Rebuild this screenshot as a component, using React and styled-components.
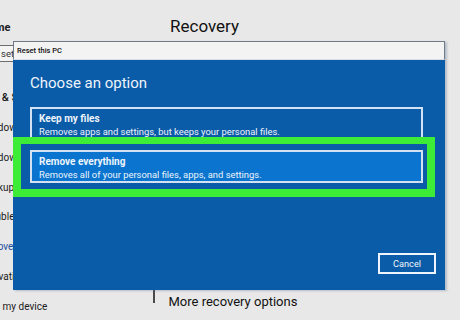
import React from "react";
import styled, { createGlobalStyle } from "styled-components";

const GlobalStyle = createGlobalStyle`
  html, body {
    margin: 0;
    padding: 0;
    background: #e8e8e8;
    font-family: Roboto, "Open Sans", sans-serif;
  }
`;

const navItems = [
  { label: "Windows Update" },
  { label: "Windows Security" },
  { label: "Backup" },
  { label: "Troubleshoot" },
  { label: "Recovery", active: true },
  { label: "Activation" },
  { label: "Find my device" },
];

const options = [
  {
    title: "Keep my files",
    text: "Removes apps and settings, but keeps your personal files.",
  },
  {
    title: "Remove everything",
    text: "Removes all of your personal files, apps, and settings.",
    selected: true,
  },
];

const Page = styled.div`
  position: relative;
  width: 460px;
  height: 320px;
  overflow: hidden;
  display: flex;
  background: #e8e8e8;
  color: #1b1b1b;
`;

const Nav = styled.nav`
  width: 169px;
  margin-left: -19px;
  padding-top: 20px;
  display: flex;
  flex-direction: column;
  flex-shrink: 0;
`;

const HomeLink = styled.div`
  height: 16px;
  line-height: 16px;
  font-size: 11px;
  font-weight: 700;
  white-space: nowrap;
`;

const SearchBox = styled.div`
  margin: 9px 0 0 -15px;
  height: 17px;
  box-sizing: border-box;
  border: 1px solid #6d6d6d;
  background: #f4f4f4;
  padding-left: 6px;
  font-size: 9.5px;
  line-height: 15px;
  color: #333;
  white-space: nowrap;
`;

const NavHeader = styled.div`
  margin: 28px 0 0 -17px;
  height: 16px;
  line-height: 16px;
  font-size: 11px;
  font-weight: 500;
  white-space: nowrap;
`;

const NavList = styled.div`
  margin-top: 7px;
  display: flex;
  flex-direction: column;
`;

const NavItem = styled.div`
  height: 29.8px;
  line-height: 29.8px;
  font-size: 10px;
  white-space: nowrap;
  color: ${(p) => (p.$active ? "#1f4f9c" : "#1b1b1b")};
`;

const Main = styled.main`
  flex: 1;
  display: flex;
  flex-direction: column;
  padding: 12px 0 8px;
`;

const Title = styled.h1`
  margin: 0 0 0 20px;
  font-size: 17px;
  font-weight: 400;
  line-height: 28px;
  color: #111;
`;

const FooterRow = styled.div`
  margin-top: auto;
  display: flex;
  align-items: flex-start;
  height: 20px;
`;

const Caret = styled.span`
  width: 1.5px;
  height: 13px;
  margin: -2px 14px 0 3px;
  background: #4a4a4a;
`;

const MoreLink = styled.span`
  font-size: 13px;
  line-height: 20px;
  color: #111;
`;

const Dialog = styled.section`
  position: absolute;
  left: 13px;
  top: 41px;
  width: 432px;
  height: 249px;
  display: flex;
  flex-direction: column;
  box-shadow: 2px 1px 2px rgba(90, 110, 140, 0.35);
`;

const TitleBar = styled.div`
  height: 19px;
  box-sizing: border-box;
  border: 1px solid #6f7b86;
  border-bottom: 1px solid #d6dde6;
  background: #f3f3f3;
  padding-left: 3px;
  font-size: 7.5px;
  font-weight: 500;
  line-height: 17px;
  color: #111;
`;

const Body = styled.div`
  flex: 1;
  display: flex;
  flex-direction: column;
  background: #0b5ca8;
  padding: 13px 9px 16px 17px;
  color: #eef4fb;
`;

const Heading = styled.h2`
  margin: 0;
  font-size: 15px;
  font-weight: 400;
  line-height: 20px;
`;

const OptionList = styled.div`
  margin: 14px 13px 0 0;
  display: flex;
  flex-direction: column;
  gap: 10px;
`;

const Option = styled.div`
  position: relative;
  height: 33px;
  box-sizing: border-box;
  border: 2px solid #d3e2f2;
  background: ${(p) => (p.$selected ? "#0b74cf" : "transparent")};
  padding: 4px 7px 0;
  display: flex;
  flex-direction: column;
  justify-content: center;
`;

const OptionTitle = styled.div`
  font-size: 10px;
  font-weight: 700;
  line-height: 12.5px;
`;

const OptionText = styled.div`
  font-size: 9.4px;
  line-height: 12.5px;
`;

const Highlight = styled.div`
  position: absolute;
  top: -15px;
  left: -19px;
  right: -14px;
  bottom: -16px;
  border: 8px solid #3dec36;
  border-top-width: 7px;
  pointer-events: none;
`;

const Actions = styled.div`
  margin-top: auto;
  display: flex;
  justify-content: flex-end;
`;

const CancelButton = styled.button`
  width: 58px;
  height: 21px;
  box-sizing: border-box;
  border: 2px solid #eef4fb;
  background: transparent;
  color: #eef4fb;
  font-family: inherit;
  font-size: 9.2px;
  padding: 0;
`;

export default function App() {
  return (
    <>
      <GlobalStyle />
      <Page>
        <Nav>
          <HomeLink>Home</HomeLink>
          <SearchBox>Find a setting</SearchBox>
          <NavHeader>Update &amp; Security</NavHeader>
          <NavList>
            {navItems.map((item) => (
              <NavItem key={item.label} $active={item.active}>
                {item.label}
              </NavItem>
            ))}
          </NavList>
        </Nav>
        <Main>
          <Title>Recovery</Title>
          <FooterRow>
            <Caret />
            <MoreLink>More recovery options</MoreLink>
          </FooterRow>
        </Main>
        <Dialog>
          <TitleBar>Reset this PC</TitleBar>
          <Body>
            <Heading>Choose an option</Heading>
            <OptionList>
              {options.map((opt) => (
                <Option key={opt.title} $selected={opt.selected}>
                  <OptionTitle>{opt.title}</OptionTitle>
                  <OptionText>{opt.text}</OptionText>
                  {opt.selected && <Highlight />}
                </Option>
              ))}
            </OptionList>
            <Actions>
              <CancelButton>Cancel</CancelButton>
            </Actions>
          </Body>
        </Dialog>
      </Page>
    </>
  );
}
